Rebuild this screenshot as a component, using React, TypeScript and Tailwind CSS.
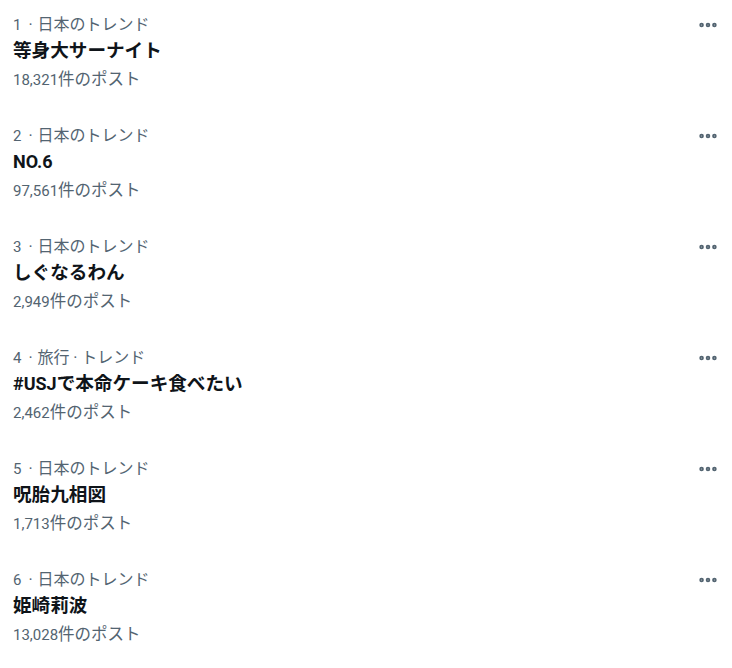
import { MoreHorizontal } from 'lucide-react';

type Trend = {
  rank: number;
  context: string;
  title: string;
  posts: string;
};

const trends: Trend[] = [
  { rank: 1, context: '日本のトレンド', title: '等身大サーナイト', posts: '18,321件のポスト' },
  { rank: 2, context: '日本のトレンド', title: 'NO.6', posts: '97,561件のポスト' },
  { rank: 3, context: '日本のトレンド', title: 'しぐなるわん', posts: '2,949件のポスト' },
  { rank: 4, context: '旅行 · トレンド', title: '#USJで本命ケーキ食べたい', posts: '2,462件のポスト' },
  { rank: 5, context: '日本のトレンド', title: '呪胎九相図', posts: '1,713件のポスト' },
  { rank: 6, context: '日本のトレンド', title: '姫崎莉波', posts: '13,028件のポスト' },
];

// CJK glyphs in the original render a little larger than the latin ones
function Mixed({ text, cjk }: { text: string; cjk: string }) {
  const parts = text.match(/[\x00-\x7f]+|[^\x00-\x7f]+/g) ?? [];
  return (
    <>
      {parts.map((p, i) =>
        /[^\x00-\x7f]/.test(p) ? (
          <span key={i} className={cjk}>
            {p}
          </span>
        ) : (
          <span key={i}>{p}</span>
        )
      )}
    </>
  );
}

function TrendRow({ trend }: { trend: Trend }) {
  return (
    <div className="flex items-start justify-between pl-[13px] pr-[12px] pt-[15px] pb-[21px]">
      <div className="flex flex-col">
        <div className="h-[20px] whitespace-nowrap text-[15px] leading-[20px] text-[#536471]">
          <span className="pr-[2px]">{trend.rank}</span>
          <span className="px-[1px] text-[16px]"> · </span>
          <Mixed text={trend.context} cjk="text-[16px]" />
        </div>
        <div className="mt-[4px] h-[24px] whitespace-nowrap text-[18px] leading-[24px] font-bold text-[#0f1419]">
          <Mixed text={trend.title} cjk="text-[18.6px]" />
        </div>
        <div className="mt-[7px] h-[20px] whitespace-nowrap text-[15px] leading-[20px] text-[#536471]">
          <Mixed text={trend.posts} cjk="text-[16.5px]" />
        </div>
      </div>
      <button className="flex h-[20px] w-[24px] items-center justify-center text-[#536471]">
        <MoreHorizontal size={22} strokeWidth={3} />
      </button>
    </div>
  );
}

export default function App() {
  return (
    <div
      className="min-h-screen w-[732px] bg-white"
      style={{ fontFamily: 'Roboto, "Noto Sans CJK JP", sans-serif' }}
    >
      {trends.map((t) => (
        <TrendRow key={t.rank} trend={t} />
      ))}
    </div>
  );
}
